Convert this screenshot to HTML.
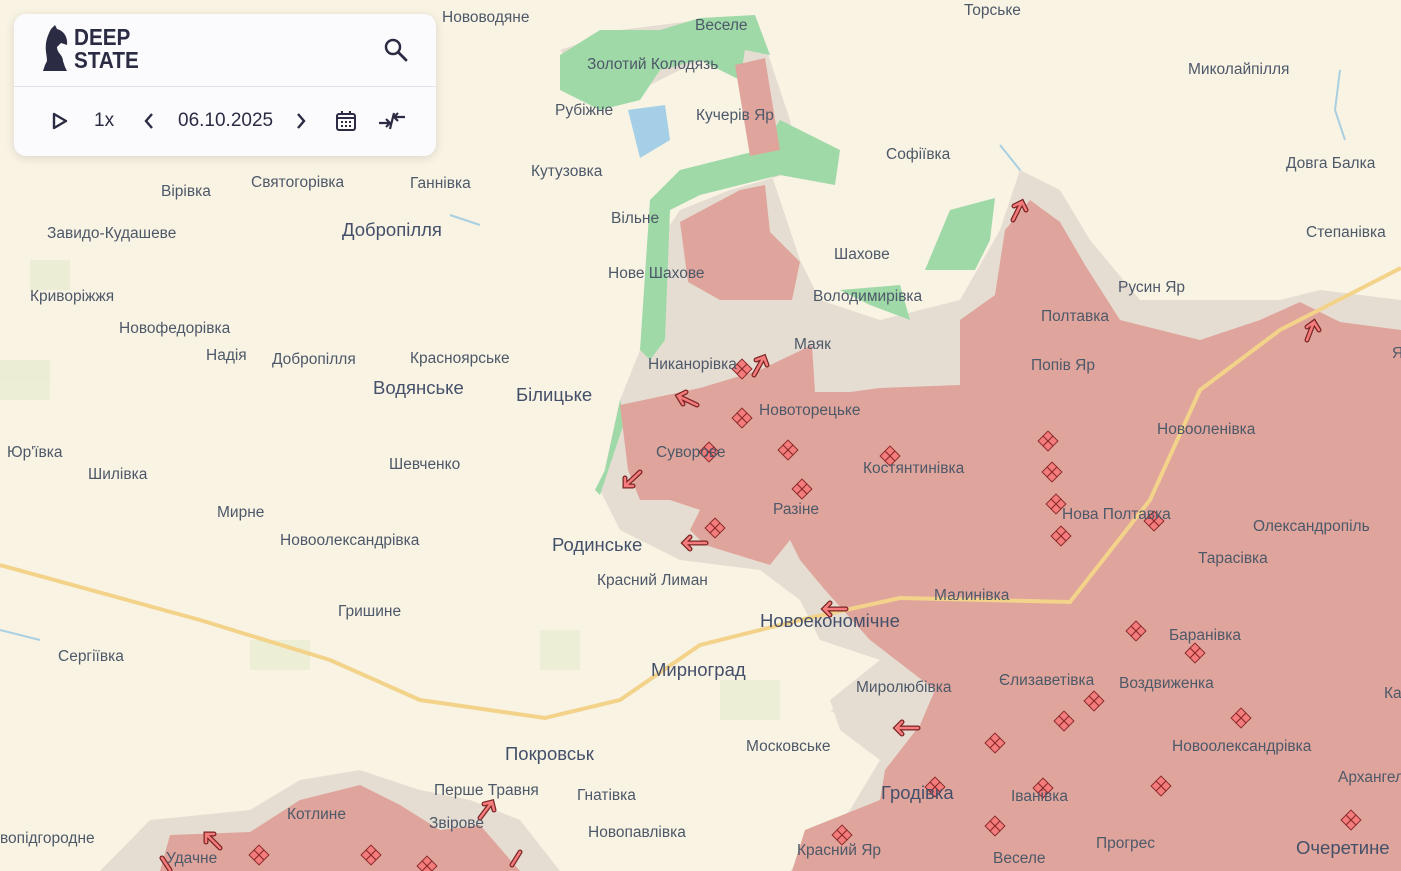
<!DOCTYPE html>
<html><head><meta charset="utf-8"><style>
html,body{margin:0;padding:0;width:1401px;height:871px;overflow:hidden;background:#f9f3e4;font-family:"Liberation Sans","DejaVu Sans",sans-serif}
svg{position:absolute;left:0;top:0}
.l{font-family:"Liberation Sans","DejaVu Sans",sans-serif;font-size:15.5px;fill:#4d5868}
.b{font-size:18.5px;fill:#44506a}
.panel{position:absolute;left:14px;top:14px;width:422px;height:142px;background:#fbfbfd;border-radius:12px;box-shadow:0 2px 10px rgba(0,0,0,.12)}
.sep{position:absolute;left:0;right:0;top:72px;border-top:1px solid #e3e4ea}
.logo{position:absolute;left:60px;top:12px;font-weight:bold;font-size:23px;line-height:23px;color:#2b2c44;font-family:"Liberation Sans",sans-serif;transform:scaleX(.9);transform-origin:left}
.ctl{position:absolute;top:96px;font-size:19px;color:#2b2c44}
</style></head><body>
<svg width="1401" height="871" viewBox="0 0 1401 871">
<defs>
<g id="m"><g stroke="#8a2a2a" stroke-width="1" fill="#f47c7c">
<rect x="-7" y="-7" width="7" height="7" transform="rotate(45)"/>
<rect x="0" y="-7" width="7" height="7" transform="rotate(45)"/>
<rect x="-7" y="0" width="7" height="7" transform="rotate(45)"/>
<rect x="0" y="0" width="7" height="7" transform="rotate(45)"/></g></g>
</defs>
<g fill="#e9ecd2" opacity=".8">
<rect x="30" y="260" width="40" height="30"/><rect x="540" y="630" width="40" height="40"/><rect x="250" y="640" width="60" height="30"/>
<rect x="0" y="360" width="50" height="40"/><rect x="720" y="680" width="60" height="40"/>
</g>
<g fill="none" stroke="#a9cfe0" stroke-width="2">
<path d="M1000 145 L1020 170 L1030 200"/><path d="M1340 70 L1335 110 L1345 140"/><path d="M450 215 L480 225"/><path d="M0 630 L40 640"/>
</g>
<path fill="#e6ddd2" d="M560 50 L620 30 L700 20 L760 30 L790 120 L800 170 L730 190 L680 210 L660 240 L665 330 L640 350 L620 400 L600 490 L620 530 L680 560 L760 570 L800 600 L820 640 L880 660 L830 700 L840 730 L880 760 L850 810 L790 871 L1401 871 L1401 300 L1320 290 L1280 300 L1140 300 L1090 240 L1060 190 L1020 170 L1000 230 L960 300 L880 320 L820 300 L800 260 L780 200 L760 140 L740 80 L700 60 L640 90 L600 100 Z"/>
<path fill="#e6ddd2" d="M100 871 L150 820 L250 810 L300 780 L360 770 L420 790 L470 800 L520 820 L560 871 Z"/>
<path fill="#e6ddd2" d="M830 710 L920 700 L930 740 L880 745 Z"/>
<path fill="#9fd9a8" d="M560 55 L600 30 L660 30 L700 18 L755 15 L770 55 L745 50 L740 80 L700 60 L660 70 L640 100 L600 110 L560 90 Z"/>
<path fill="#9fd9a8" d="M780 120 L840 150 L835 185 L780 175 L700 195 L670 210 L665 340 L650 360 L640 350 L650 200 L680 170 L760 150 Z"/>
<path fill="#9fd9a8" d="M620 400 L605 470 L595 490 L600 495 L625 420 Z"/>
<path fill="#9fd9a8" d="M925 270 L950 210 L995 198 L990 240 L975 270 Z"/>
<path fill="#9fd9a8" d="M840 290 L900 285 L910 320 L870 305 Z"/>
<path fill="#9fd9a8" d="M255 830 L300 800 L330 810 L300 835 Z"/>
<path fill="#a4cfe6" d="M628 110 L665 105 L670 140 L640 158 Z"/>
<g fill="#dfa59c">
<path d="M620 405 L700 388 L760 370 L812 345 L815 392 L850 392 L880 388 L960 385 L960 320 L995 295 L1005 230 L1030 200 L1060 222 L1085 265 L1120 320 L1200 340 L1260 320 L1300 302 L1340 322 L1401 330 L1401 871 L792 871 L805 830 L880 800 L885 770 L920 725 L935 690 L870 640 L825 590 L800 560 L790 540 L770 565 L705 545 L690 530 L700 510 L670 500 L640 500 L628 470 Z"/>
<path d="M680 222 L740 190 L765 185 L770 232 L800 262 L792 300 L720 300 L688 282 Z"/>
<path d="M735 65 L765 58 L780 150 L750 156 Z"/>
<path d="M160 871 L170 835 L250 832 L300 800 L360 785 L400 805 L440 830 L480 825 L520 871 Z"/>
</g>
<path fill="none" stroke="#f3d28a" stroke-width="4" d="M0 565 L200 620 L330 660 L420 700 L545 718 L620 700 L700 645 L800 620 L900 598 L1070 602 L1150 500 L1200 390 L1280 330 L1401 268"/>
<g>
<use href="#m" x="742" y="369"/><use href="#m" x="742" y="418"/><use href="#m" x="709" y="452"/><use href="#m" x="788" y="450"/><use href="#m" x="890" y="456"/><use href="#m" x="802" y="489"/><use href="#m" x="715" y="528"/><use href="#m" x="1048" y="441"/><use href="#m" x="1052" y="472"/><use href="#m" x="1056" y="504"/><use href="#m" x="1061" y="536"/><use href="#m" x="1154" y="521"/><use href="#m" x="1136" y="631"/><use href="#m" x="1195" y="653"/><use href="#m" x="1094" y="701"/><use href="#m" x="1064" y="721"/><use href="#m" x="995" y="743"/><use href="#m" x="1241" y="718"/><use href="#m" x="935" y="787"/><use href="#m" x="1043" y="788"/><use href="#m" x="1161" y="786"/><use href="#m" x="995" y="826"/><use href="#m" x="842" y="835"/><use href="#m" x="1351" y="820"/><use href="#m" x="259" y="855"/><use href="#m" x="371" y="855"/><use href="#m" x="427" y="866"/>
</g>
<g fill="none" stroke="#7a2424" stroke-width="5" stroke-linecap="round">
<path d="M1013 220 L1022 202 M1014 206 L1022 202 L1026 210"/><path d="M1307 340 L1314 322 M1307 327 L1314 322 L1319 330"/><path d="M754 375 L764 357 M756 360 L764 357 L767 365"/><path d="M697 405 L678 396 M683 404 L678 396 L686 392"/><path d="M640 472 L625 486 M625 478 L625 486 L633 486"/><path d="M706 543 L684 543 M690 537 L684 543 L690 549"/><path d="M846 609 L824 609 M830 603 L824 609 L830 615"/><path d="M918 728 L896 728 M902 722 L896 728 L902 734"/><path d="M220 848 L206 834 M206 842 L206 834 L214 834"/><path d="M480 818 L492 802 M484 804 L492 802 L494 810"/><path d="M512 865 L520 852"/><path d="M170 870 L162 858"/></g>
<g fill="none" stroke="#f47c7c" stroke-width="2.5" stroke-linecap="round">
<path d="M1013 220 L1022 202 M1014 206 L1022 202 L1026 210"/><path d="M1307 340 L1314 322 M1307 327 L1314 322 L1319 330"/><path d="M754 375 L764 357 M756 360 L764 357 L767 365"/><path d="M697 405 L678 396 M683 404 L678 396 L686 392"/><path d="M640 472 L625 486 M625 478 L625 486 L633 486"/><path d="M706 543 L684 543 M690 537 L684 543 L690 549"/><path d="M846 609 L824 609 M830 603 L824 609 L830 615"/><path d="M918 728 L896 728 M902 722 L896 728 L902 734"/><path d="M220 848 L206 834 M206 842 L206 834 L214 834"/><path d="M480 818 L492 802 M484 804 L492 802 L494 810"/><path d="M512 865 L520 852"/><path d="M170 870 L162 858"/></g>
<g class="l">
<text x="442" y="22">Нововодяне</text><text x="695" y="30">Веселе</text><text x="964" y="15">Торське</text><text x="587" y="69">Золотий Колодязь</text><text x="1188" y="74">Миколайпілля</text>
<text x="555" y="115">Рубіжне</text><text x="696" y="120">Кучерів Яр</text><text x="886" y="159">Софіївка</text><text x="1286" y="168">Довга Балка</text>
<text x="531" y="176">Кутузовка</text><text x="161" y="196">Вірівка</text><text x="251" y="187">Святогорівка</text><text x="410" y="188">Ганнівка</text>
<text x="611" y="223">Вільне</text><text x="47" y="238">Завидо-Кудашеве</text><text x="1306" y="237">Степанівка</text>
<text x="834" y="259">Шахове</text><text x="608" y="278">Нове Шахове</text><text x="1118" y="292">Русин Яр</text><text x="30" y="301">Криворіжжя</text>
<text x="813" y="301">Володимирівка</text><text x="1041" y="321">Полтавка</text><text x="119" y="333">Новофедорівка</text>
<text x="794" y="349">Маяк</text><text x="206" y="360">Надія</text><text x="272" y="364">Добропілля</text><text x="410" y="363">Красноярське</text>
<text x="648" y="369">Никанорівка</text><text x="1031" y="370">Попів Яр</text><text x="759" y="415">Новоторецьке</text>
<text x="1157" y="434">Новооленівка</text><text x="7" y="457">Юр'ївка</text><text x="656" y="457">Суворове</text><text x="389" y="469">Шевченко</text>
<text x="863" y="473">Костянтинівка</text><text x="88" y="479">Шилівка</text><text x="773" y="514">Разіне</text><text x="217" y="517">Мирне</text>
<text x="1062" y="519">Нова Полтавка</text><text x="1253" y="531">Олександропіль</text><text x="280" y="545">Новоолександрівка</text>
<text x="1198" y="563">Тарасівка</text><text x="597" y="585">Красний Лиман</text><text x="934" y="600">Малинівка</text>
<text x="338" y="616">Гришине</text><text x="1169" y="640">Баранівка</text><text x="58" y="661">Сергіївка</text>
<text x="999" y="685">Єлизаветівка</text><text x="1119" y="688">Воздвиженка</text><text x="856" y="692">Миролюбівка</text><text x="1384" y="698">Ка</text>
<text x="746" y="751">Московське</text><text x="1172" y="751">Новоолександрівка</text><text x="1338" y="782">Архангел</text>
<text x="434" y="795">Перше Травня</text><text x="577" y="800">Гнатівка</text><text x="1011" y="801">Іванівка</text>
<text x="287" y="819">Котлине</text><text x="429" y="828">Звірове</text><text x="588" y="837">Новопавлівка</text>
<text x="0" y="843">вопідгородне</text><text x="1096" y="848">Прогрес</text><text x="797" y="855">Красний Яр</text>
<text x="166" y="863">Удачне</text><text x="993" y="863">Веселе</text><text x="1392" y="358">Я</text>
</g>
<g class="l b">
<text x="342" y="236">Добропілля</text><text x="373" y="394">Водянське</text><text x="516" y="401">Білицьке</text>
<text x="552" y="551">Родинське</text><text x="760" y="627">Новоекономічне</text><text x="651" y="676">Мирноград</text>
<text x="505" y="760">Покровськ</text><text x="881" y="799">Гродівка</text><text x="1296" y="854">Очеретине</text>
</g>
</svg>
<div class="panel">
<svg width="30" height="46" viewBox="0 0 30 46" style="left:29px;top:11px"><path fill="#2b2c44" d="M8 4 L12 0 L14 4 C22 6 25 14 24 20 L18 18 L14 22 C14 28 20 30 20 36 L22 42 L24 46 L0 46 L2 40 L4 36 C4 30 2 26 3 18 C4 12 6 8 8 4 Z"/></svg>
<div class="logo">DEEP<br>STATE</div>
<svg width="26" height="26" viewBox="0 0 26 26" style="left:369px;top:23px"><circle cx="10" cy="10" r="7" fill="none" stroke="#2b2c44" stroke-width="2.5"/><path d="M15 15 L23 23" stroke="#2b2c44" stroke-width="2.8" stroke-linecap="round"/></svg>
<div class="sep"></div>
<svg width="20" height="20" viewBox="0 0 20 20" style="left:36px;top:97px"><path d="M4 3 L16 10 L4 17 Z" fill="none" stroke="#2b2c44" stroke-width="2.4" stroke-linejoin="round"/></svg>
<div class="ctl" style="left:80px">1x</div>
<svg width="20" height="20" viewBox="0 0 20 20" style="left:125px;top:97px"><path d="M13 3 L7 10 L13 17" fill="none" stroke="#2b2c44" stroke-width="2.4"/></svg>
<div class="ctl" style="left:164px">06.10.2025</div>
<svg width="20" height="20" viewBox="0 0 20 20" style="left:277px;top:97px"><path d="M7 3 L13 10 L7 17" fill="none" stroke="#2b2c44" stroke-width="2.4"/></svg>
<svg width="22" height="22" viewBox="0 0 22 22" style="left:321px;top:96px"><rect x="2" y="4" width="18" height="16" rx="2" fill="none" stroke="#2b2c44" stroke-width="2"/><path d="M2 8 H20 M7 1 V5 M15 1 V5" stroke="#2b2c44" stroke-width="2"/><g fill="#2b2c44"><rect x="6" y="11" width="2" height="2"/><rect x="10" y="11" width="2" height="2"/><rect x="14" y="11" width="2" height="2"/><rect x="6" y="15" width="2" height="2"/><rect x="10" y="15" width="2" height="2"/><rect x="14" y="15" width="2" height="2"/></g></svg>
<svg width="28" height="24" viewBox="0 0 28 24" style="left:364px;top:95px"><g fill="none" stroke="#2b2c44" stroke-width="2.2"><path d="M1 14 H12 M8 10 L12 14 L8 18"/><path d="M27 8 H16 M20 4 L16 8 L20 12"/><path d="M12 20 L16 4"/></g></svg>
</div>
</body></html>
